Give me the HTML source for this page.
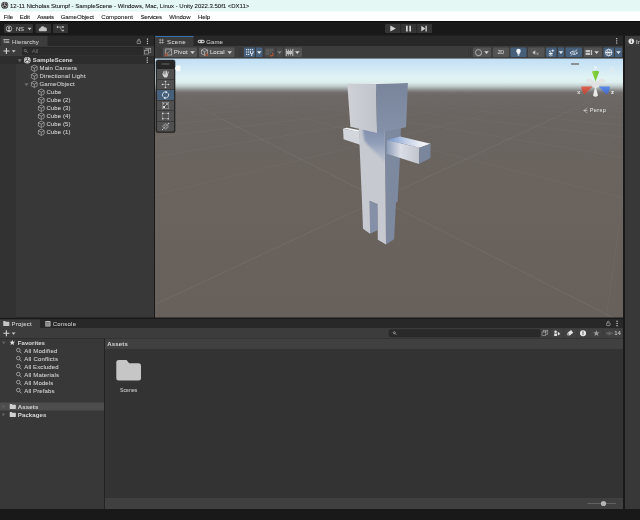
<!DOCTYPE html>
<html><head><meta charset="utf-8"><title>Unity</title>
<style>
html,body{margin:0;padding:0;background:#191919;overflow:hidden;width:640px;height:520px}
#r{position:absolute;left:0;top:0;width:1280px;height:1040px;transform:scale(.5);transform-origin:0 0;
font-family:"Liberation Sans",sans-serif;overflow:hidden;background:#191919}
#r>div,#r>span,#r>svg{position:absolute;display:block}
#r>span{white-space:pre;-webkit-text-stroke:.15px}
</style></head><body><div id="r">
<div style="left:0px;top:0px;width:1280px;height:42px;background:#ffffff;"></div>
<div style="left:0px;top:0px;width:1280px;height:23.2px;background:#e5f7f5;"></div>
<svg style="left:1.6px;top:3.4px;" width="15" height="15" viewBox="0 0 16 16"><circle cx="8" cy="8" r="7.5" fill="#222"/><path d="M8 8 L8 2.5 M8 8 L3.2 10.8 M8 8 L12.8 10.8" stroke="#eee" stroke-width="1.6" fill="none"/><path d="M8 1.8 L13.4 4.9 L13.4 11.1 L8 14.2 L2.6 11.1 L2.6 4.9 Z" fill="none" stroke="#eee" stroke-width="1"/></svg>
<span style="left:20px;top:3.3px;line-height:16px;font-size:12px;color:#111;letter-spacing:-0.031px;">12-11 Nicholas Stumpf - SampleScene - Windows, Mac, Linux - Unity 2022.3.50f1 &lt;DX11&gt;</span>
<span style="left:7.6px;top:25.000000000000004px;line-height:16px;font-size:12px;color:#111;letter-spacing:-0.286px;">File</span>
<span style="left:39.6px;top:25.000000000000004px;line-height:16px;font-size:12px;color:#111;letter-spacing:-0.072px;">Edit</span>
<span style="left:74.6px;top:25.000000000000004px;line-height:16px;font-size:12px;color:#111;letter-spacing:-0.569px;">Assets</span>
<span style="left:121.4px;top:25.000000000000004px;line-height:16px;font-size:12px;color:#111;letter-spacing:-0.076px;">GameObject</span>
<span style="left:202.5px;top:25.000000000000004px;line-height:16px;font-size:12px;color:#111;letter-spacing:0.161px;">Component</span>
<span style="left:281px;top:25.000000000000004px;line-height:16px;font-size:12px;color:#111;letter-spacing:-0.439px;">Services</span>
<span style="left:338.5px;top:25.000000000000004px;line-height:16px;font-size:12px;color:#111;letter-spacing:-0.031px;">Window</span>
<span style="left:396px;top:25.000000000000004px;line-height:16px;font-size:12px;color:#111;letter-spacing:-0.172px;">Help</span>
<div style="left:0px;top:42px;width:1280px;height:30px;background:#191919;"></div>
<div style="left:0px;top:42px;width:1280px;height:2.4px;background:#0b0b0b;"></div>
<div style="left:7.5px;top:48px;width:58.7px;height:18.4px;background:#333333;border-radius:2px;"></div>
<div style="left:70.8px;top:48px;width:31.200000000000003px;height:18.4px;background:#333333;border-radius:2px;"></div>
<div style="left:106.2px;top:48px;width:29.999999999999986px;height:18.4px;background:#333333;border-radius:2px;"></div>
<span style="left:32px;top:49.4px;line-height:16px;font-size:12px;color:#c8c8c8;letter-spacing:-0.536px;">NS</span>
<div style="left:770px;top:48px;width:30px;height:18.4px;background:#353535;border-radius:2px 0 0 2px;"></div>
<div style="left:801px;top:48px;width:31px;height:18.4px;background:#353535;"></div>
<div style="left:833px;top:48px;width:31.4px;height:18.4px;background:#353535;border-radius:0 2px 2px 0;"></div>
<svg style="left:770px;top:48px;" width="95" height="18.4" viewBox="0 0 95 18.4"><path d="M10.6 3.2 L21.6 9.2 L10.6 15.2 Z" fill="#d4d4d4"/><rect x="42" y="3.4" width="3.4" height="11.6" fill="#d4d4d4"/><rect x="48.6" y="3.4" width="3.4" height="11.6" fill="#d4d4d4"/><path d="M72.6 3.4 L80.6 9.2 L72.6 15 Z" fill="#d4d4d4"/><rect x="81" y="3.4" width="2.6" height="11.6" fill="#d4d4d4"/></svg>
<div style="left:0px;top:71.4px;width:308px;height:20.6px;background:#282828;"></div>
<div style="left:1px;top:72.4px;width:94px;height:19.6px;background:#3c3c3c;"></div>
<div style="left:0px;top:92px;width:308px;height:20px;background:#3c3c3c;"></div>
<div style="left:0px;top:112px;width:308px;height:522.6px;background:#383838;"></div>
<div style="left:0px;top:112px;width:32px;height:522.6px;background:#323232;"></div>
<div style="left:0px;top:112.4px;width:308px;height:15.4px;background:#2d2d2d;"></div>
<span style="left:24px;top:74.6px;line-height:16px;font-size:12px;color:#c8c8c8;letter-spacing:0.293px;">Hierarchy</span>
<div style="left:44px;top:92.6px;width:242px;height:18px;background:#2a2a2a;border-radius:3px;border:1px solid #242424;border-top:2.6px solid #222;box-sizing:border-box;"></div>
<span style="left:63.6px;top:93.2px;line-height:16px;font-size:12px;color:#686868;letter-spacing:-0.315px;">All</span>
<span style="left:65.6px;top:111.3px;line-height:16px;font-size:12px;color:#d2d2d2;font-weight:700;letter-spacing:0.178px;">SampleScene</span>
<span style="left:79px;top:127.3px;line-height:16px;font-size:12px;color:#d2d2d2;letter-spacing:0.270px;">Main Camera</span>
<span style="left:79px;top:143.3px;line-height:16px;font-size:12px;color:#d2d2d2;letter-spacing:0.380px;">Directional Light</span>
<span style="left:79px;top:159.3px;line-height:16px;font-size:12px;color:#d2d2d2;letter-spacing:0.314px;">GameObject</span>
<span style="left:93px;top:175.3px;line-height:16px;font-size:12px;color:#d2d2d2;letter-spacing:0.328px;">Cube</span>
<span style="left:93px;top:191.3px;line-height:16px;font-size:12px;color:#d2d2d2;letter-spacing:0.164px;">Cube (2)</span>
<span style="left:93px;top:207.3px;line-height:16px;font-size:12px;color:#d2d2d2;letter-spacing:0.164px;">Cube (3)</span>
<span style="left:93px;top:223.3px;line-height:16px;font-size:12px;color:#d2d2d2;letter-spacing:0.164px;">Cube (4)</span>
<span style="left:93px;top:239.3px;line-height:16px;font-size:12px;color:#d2d2d2;letter-spacing:0.164px;">Cube (5)</span>
<span style="left:93px;top:255.3px;line-height:16px;font-size:12px;color:#d2d2d2;letter-spacing:0.164px;">Cube (1)</span>
<div style="left:310.4px;top:71.4px;width:936px;height:20.6px;background:#282828;"></div>
<div style="left:310.4px;top:72.4px;width:77px;height:19.6px;background:#3c3c3c;"></div>
<div style="left:310.4px;top:72px;width:77px;height:1.8px;background:#3672b0;"></div>
<div style="left:310.4px;top:92px;width:936px;height:25.4px;background:#3c3c3c;"></div>
<span style="left:334px;top:74.6px;line-height:16px;font-size:12px;color:#d2d2d2;letter-spacing:0.794px;">Scene</span>
<span style="left:412.6px;top:74.6px;line-height:16px;font-size:12px;color:#c4c4c4;letter-spacing:0.178px;">Game</span>
<div style="left:1250px;top:71.4px;width:30px;height:20.6px;background:#282828;"></div>
<div style="left:1250px;top:72.4px;width:30px;height:19.6px;background:#3c3c3c;"></div>
<div style="left:1250px;top:92px;width:30px;height:925.6px;background:#383838;"></div>
<span style="left:1272px;top:74.6px;line-height:16px;font-size:12px;color:#d2d2d2;">In</span>
<div style="left:0px;top:637.5px;width:1246px;height:18.5px;background:#282828;"></div>
<div style="left:0px;top:638.5px;width:80px;height:18px;background:#3c3c3c;"></div>
<div style="left:0px;top:656px;width:1246px;height:21px;background:#3c3c3c;"></div>
<div style="left:0px;top:677px;width:208px;height:340.6px;background:#383838;"></div>
<div style="left:208px;top:677px;width:2px;height:340.6px;background:#232323;"></div>
<div style="left:210px;top:677px;width:1036px;height:21px;background:#404040;"></div>
<div style="left:210px;top:698px;width:1036px;height:298px;background:#333333;"></div>
<div style="left:210px;top:995.8px;width:1036px;height:21.8px;background:#404040;"></div>
<span style="left:23px;top:639.1999999999999px;line-height:16px;font-size:12px;color:#d2d2d2;letter-spacing:0.520px;">Project</span>
<span style="left:105.4px;top:639.1999999999999px;line-height:16px;font-size:12px;color:#c4c4c4;letter-spacing:0.424px;">Console</span>
<div style="left:0px;top:805px;width:208px;height:16px;background:#4d4d4d;"></div>
<div style="left:0px;top:676.4px;width:208px;height:1.2px;background:#2e2e2e;"></div>
<span style="left:35.6px;top:676.5999999999999px;line-height:16px;font-size:12px;color:#d2d2d2;font-weight:700;letter-spacing:0.116px;">Favorites</span>
<span style="left:48.6px;top:692.5999999999999px;line-height:16px;font-size:12px;color:#d2d2d2;letter-spacing:0.364px;">All Modified</span>
<span style="left:48.6px;top:708.5999999999999px;line-height:16px;font-size:12px;color:#d2d2d2;letter-spacing:0.378px;">All Conflicts</span>
<span style="left:48.6px;top:724.5999999999999px;line-height:16px;font-size:12px;color:#d2d2d2;letter-spacing:0.213px;">All Excluded</span>
<span style="left:48.6px;top:740.5999999999999px;line-height:16px;font-size:12px;color:#d2d2d2;letter-spacing:0.342px;">All Materials</span>
<span style="left:48.6px;top:756.5999999999999px;line-height:16px;font-size:12px;color:#d2d2d2;letter-spacing:0.304px;">All Models</span>
<span style="left:48.6px;top:772.5999999999999px;line-height:16px;font-size:12px;color:#d2d2d2;letter-spacing:0.215px;">All Prefabs</span>
<span style="left:35.6px;top:804.5999999999999px;line-height:16px;font-size:12px;color:#d2d2d2;font-weight:700;letter-spacing:0.340px;">Assets</span>
<span style="left:35.6px;top:820.5999999999999px;line-height:16px;font-size:12px;color:#d2d2d2;font-weight:700;letter-spacing:0.251px;">Packages</span>
<span style="left:214.4px;top:679.0px;line-height:16px;font-size:12px;color:#d2d2d2;font-weight:700;letter-spacing:0.373px;">Assets</span>
<span style="left:240px;top:774.4px;line-height:14px;font-size:10px;color:#c8c8c8;letter-spacing:0.273px;">Scenes</span>
<div style="left:0px;top:1017.6px;width:1280px;height:22.4px;background:#191919;"></div>
<div style="left:310.4px;top:117.2px;width:936px;height:517.4px;background:linear-gradient(to bottom,#c1dff5 0.4px,#d1e8f5 18.8px,#e1f4f4 39.8px,#dceeee 47.8px,#c6d2d2 54.4px,#a6acac 59.4px,#8b8c8c 63.4px,#767271 67.4px,#6e6967 72.8px,#6b6561 112.8px,#68605a 516.8px);"></div>
<svg style="left:310.4px;top:117.2px;" width="936" height="517.4" viewBox="0 0 936 517.4"><defs><linearGradient id="gl" x1="0" x2="1" y1="0" y2="0"><stop offset="0" stop-color="#cfd1d7"/><stop offset="1" stop-color="#c1c4cc"/></linearGradient><linearGradient id="gd" x1="0" x2="0" y1="0" y2="1"><stop offset="0" stop-color="#79859b"/><stop offset="1" stop-color="#8491a8"/></linearGradient><linearGradient id="ga" x1="0" x2="1" y1="0" y2="0"><stop offset="0" stop-color="#8e9cb8"/><stop offset=".42" stop-color="#dadde5"/><stop offset="1" stop-color="#c0c4cc"/></linearGradient><linearGradient id="gt" x1="0" x2="1" y1="0" y2="0"><stop offset="0" stop-color="#7091cf"/><stop offset=".45" stop-color="#c4d0e6"/><stop offset=".8" stop-color="#eef1f6"/><stop offset="1" stop-color="#f1f3f7"/></linearGradient><linearGradient id="gb" gradientUnits="userSpaceOnUse" x1="0" y1="144.8" x2="0" y2="202.8"><stop offset="0" stop-color="#8290ad"/><stop offset=".45" stop-color="#909db8" stop-opacity=".95"/><stop offset="1" stop-color="#aab5c9" stop-opacity=".55"/></linearGradient><filter id="bl" x="-20%" y="-20%" width="140%" height="140%"><feGaussianBlur stdDeviation="1.7"/></filter><clipPath id="cf"><polygon points="407.4,134.8 459.2,134.8 461.4,300.2 413.4,298.8"/></clipPath></defs><linearGradient id="gg" gradientUnits="userSpaceOnUse" x1="0" y1="64.8" x2="0" y2="132.8"><stop offset="0" stop-color="#8c8a86" stop-opacity="0"/><stop offset="1" stop-color="#8c8a86" stop-opacity="1"/></linearGradient><line x1="966.0" y1="64.8" x2="902.1" y2="520.8" stroke="url(#gg)" stroke-width="1.8" opacity="0.15"/><line x1="914.0" y1="64.8" x2="-61.9" y2="520.8" stroke="url(#gg)" stroke-width="1.8" opacity="0.26"/><line x1="862.0" y1="64.8" x2="-1025.9" y2="520.8" stroke="url(#gg)" stroke-width="1.8" opacity="0.15"/><line x1="810.0" y1="64.8" x2="-1989.9" y2="520.8" stroke="url(#gg)" stroke-width="1.8" opacity="0.15"/><line x1="758.0" y1="64.8" x2="-2953.9" y2="520.8" stroke="url(#gg)" stroke-width="1.8" opacity="0.15"/><line x1="706.0" y1="64.8" x2="-3917.9" y2="520.8" stroke="url(#gg)" stroke-width="1.8" opacity="0.15"/><line x1="654.0" y1="64.8" x2="-4881.9" y2="520.8" stroke="url(#gg)" stroke-width="1.8" opacity="0.15"/><line x1="602.0" y1="64.8" x2="-5845.9" y2="520.8" stroke="url(#gg)" stroke-width="1.8" opacity="0.15"/><line x1="550.0" y1="64.8" x2="-6809.9" y2="520.8" stroke="url(#gg)" stroke-width="1.8" opacity="0.15"/><line x1="498.0" y1="64.8" x2="-7773.9" y2="520.8" stroke="url(#gg)" stroke-width="1.8" opacity="0.15"/><line x1="22.8" y1="64.8" x2="921.1" y2="520.8" stroke="url(#gg)" stroke-width="1.8" opacity="0.26"/><line x1="76.1" y1="64.8" x2="1909.2" y2="520.8" stroke="url(#gg)" stroke-width="1.8" opacity="0.15"/><line x1="129.4" y1="64.8" x2="2897.3" y2="520.8" stroke="url(#gg)" stroke-width="1.8" opacity="0.15"/><line x1="182.7" y1="64.8" x2="3885.4" y2="520.8" stroke="url(#gg)" stroke-width="1.8" opacity="0.15"/><line x1="236.0" y1="64.8" x2="4873.5" y2="520.8" stroke="url(#gg)" stroke-width="1.8" opacity="0.15"/><line x1="289.3" y1="64.8" x2="5861.6" y2="520.8" stroke="url(#gg)" stroke-width="1.8" opacity="0.15"/><line x1="342.6" y1="64.8" x2="6849.7" y2="520.8" stroke="url(#gg)" stroke-width="1.8" opacity="0.15"/><line x1="395.9" y1="64.8" x2="7837.8" y2="520.8" stroke="url(#gg)" stroke-width="1.8" opacity="0.15"/><line x1="449.2" y1="64.8" x2="8825.9" y2="520.8" stroke="url(#gg)" stroke-width="1.8" opacity="0.15"/><polygon points="376.0,140.6 407.6,146.6 411.6,173.2 377.2,161.4" fill="#d3d6dc"/><polygon points="376.0,140.2 383.6,138.6 407.6,143.2 407.6,146.8" fill="#f2f4f7"/><polygon points="459.2,134.8 492.0,134.8 489.2,212.8 485.2,286.6 461.4,300.2" fill="#7d899f"/><polygon points="461.4,298.8 482.0,286.6 478.2,361.6 462.0,372.2" fill="#7d899f"/><polygon points="429.2,284.4 445.0,290.8 445.0,343.6 430.2,350.6" fill="#8390a7"/><polygon points="407.4,134.8 459.2,134.8 461.4,300.2 462.0,372.2 445.6,362.6 445.0,290.8 429.2,284.4 430.2,350.6 416.0,340.4 413.4,272.8" fill="#c6c9d0"/><g clip-path="url(#cf)"><polygon points="414.8,134.8 473.6,134.8 473.6,216.8 457.2,204.0 438.0,184.8 426.0,173.6 418.4,164.0" fill="url(#gb)" filter="url(#bl)"/></g><polygon points="384.6,50.3 442.1,49.8 444.1,149.0 390.8,136.6" fill="url(#gl)"/><polygon points="442.1,49.8 505.8,49.0 502.1,137.3 444.1,149.0" fill="url(#gd)"/><polygon points="384.6,50.6 442.1,48.8 505.8,49.2 442.1,50.8" fill="#e8ebef"/><polygon points="464.0,162.8 529.0,178.4 528.0,211.0 463.6,190.6" fill="url(#ga)"/><polygon points="464.0,162.8 490.4,156.2 551.2,170.4 529.0,178.4" fill="url(#gt)"/><polygon points="529.0,178.4 551.2,170.4 550.8,198.8 528.0,211.0" fill="#7a869c"/></svg>
<div style="left:312.2px;top:120.2px;width:37.6px;height:145.2px;background:#262626;border-radius:4px;box-shadow:0 0 0 1px rgba(20,20,20,.55);"></div>
<div style="left:322.6px;top:125.6px;width:16.4px;height:4.4px;background:#464646;"></div>
<div style="left:314.4px;top:138px;width:33.2px;height:19.6px;background:#505050;"></div>
<div style="left:314.4px;top:159px;width:33.2px;height:19.6px;background:#505050;"></div>
<div style="left:314.4px;top:180px;width:33.2px;height:19.6px;background:#46607c;"></div>
<div style="left:314.4px;top:201px;width:33.2px;height:19.6px;background:#505050;"></div>
<div style="left:314.4px;top:222px;width:33.2px;height:19.6px;background:#505050;"></div>
<div style="left:314.4px;top:243px;width:33.2px;height:19.6px;background:#505050;border-radius:0 0 3px 3px;"></div>
<svg style="left:322.6px;top:139.6px;" width="16" height="16" viewBox="0 0 16 16"><g fill="#d6d6d6"><rect x="4.6" y="2.4" width="1.9" height="8" rx=".95" transform="rotate(-12 5.5 10)"/><rect x="6.6" y=".8" width="1.9" height="9" rx=".95" transform="rotate(-3 7.5 10)"/><rect x="8.8" y="1" width="1.9" height="9" rx=".95" transform="rotate(5 9.7 10)"/><rect x="11" y="2.6" width="1.8" height="8" rx=".9" transform="rotate(14 11.9 10)"/><path d="M1.4 7.4 Q2.2 6.2 3.4 7.2 L5.4 9.6 L12.8 8.4 Q13.4 13 10.6 15.2 H6.2 Q4.6 14.4 3.6 11.8 Z"/></g></svg>
<svg style="left:322.6px;top:160.6px;overflow:visible;" width="16" height="16" viewBox="0 0 16 16"><path d="M8 2.6V6.4M8 9.6V13.4M2.6 8H6.4M9.6 8H13.4" stroke="#d6d6d6" stroke-width="1.2" fill="none"/><path d="M8 -.2 L10.2 3 H5.8 Z M8 16.2 L10.2 13 H5.8 Z M-.2 8 L3 5.8 V10.2 Z M16.2 8 L13 5.8 V10.2 Z" fill="#d6d6d6"/><rect x="7.3" y="7.3" width="1.4" height="1.4" fill="#d6d6d6"/></svg>
<svg style="left:322.6px;top:182px;overflow:visible;" width="16" height="16" viewBox="0 0 16 16"><path d="M2.6 11.4 A6.4 6.4 0 0 1 9 1.8" stroke="#e8edf2" stroke-width="1.6" fill="none"/><path d="M13.4 4.6 A6.4 6.4 0 0 1 7 14.2" stroke="#e8edf2" stroke-width="1.6" fill="none"/><path d="M8.4 -.6 L12.6 2.4 L8.2 4.8 Z M7.6 16.6 L3.4 13.6 L7.8 11.2 Z" fill="#e8edf2"/></svg>
<svg style="left:322.6px;top:203px;" width="16" height="16" viewBox="0 0 16 16"><rect x="1.5" y="1.5" width="13" height="13" fill="none" stroke="#a4a4a4" stroke-width="1.1"/><rect x="3" y="9" width="4" height="4" fill="#d6d6d6"/><path d="M7.2 8.8 L11.4 4.6" stroke="#d6d6d6" stroke-width="1.3"/><path d="M8.6 3.6 H12.4 V7.4 Z" fill="#d6d6d6"/><rect x="3" y="3.2" width="2.6" height="2.6" fill="#d6d6d6" opacity=".8"/></svg>
<svg style="left:322.6px;top:224px;" width="16" height="16" viewBox="0 0 16 16"><rect x="2.5" y="2.5" width="11" height="11" fill="none" stroke="#9e9e9e" stroke-width="1"/><circle cx="2.5" cy="2.5" r="1.7" fill="#d6d6d6"/><circle cx="13.5" cy="2.5" r="1.7" fill="#d6d6d6"/><circle cx="2.5" cy="13.5" r="1.7" fill="#d6d6d6"/><circle cx="13.5" cy="13.5" r="1.7" fill="#d6d6d6"/></svg>
<svg style="left:322.6px;top:245px;" width="16" height="16" viewBox="0 0 16 16"><ellipse cx="8" cy="8" rx="3.2" ry="6" fill="none" stroke="#b4b4b4" stroke-width="1"/><ellipse cx="8" cy="8" rx="6" ry="3.2" fill="none" stroke="#b4b4b4" stroke-width="1"/><path d="M2 14 L14 2" stroke="#b4b4b4" stroke-width="1"/><path d="M15.4 .6 L15 4 L12 1 Z" fill="#d6d6d6"/><circle cx="2" cy="14" r="1.2" fill="#d6d6d6"/></svg>
<svg style="left:349px;top:130.4px;" width="13" height="14" viewBox="0 0 13 14"><path d="M.6 6.8 L4.4 .8 H11.8 V12.6 H4.4 Z" fill="#fbfbfb"/></svg>
<svg style="left:1120px;top:110px;" width="140" height="100" viewBox="0 0 140 100"><defs><linearGradient id="cg" x1="0" x2="1"><stop offset="0" stop-color="#8fd84a"/><stop offset="1" stop-color="#6cc02a"/></linearGradient><linearGradient id="cr" x1="0" x2="0" y1="0" y2="1"><stop offset="0" stop-color="#e0604e"/><stop offset="1" stop-color="#b8473a"/></linearGradient><linearGradient id="cb" x1="0" x2="0" y1="0" y2="1"><stop offset="0" stop-color="#5d8bea"/><stop offset="1" stop-color="#3f68c8"/></linearGradient></defs><polygon points="68.4,58.8 52.0,54.0 52.4,49.6 56.8,46.4 61.2,47.6 70.8,56.0" fill="#e4e4e4"/><polygon points="74.0,58.8 90.4,54.0 90.0,49.6 85.6,46.4 81.2,47.6 71.6,56.0" fill="#e4e4e4"/><path d="M71.0,52.8 L63.8,33.2 Q71.0,29.6 78.4,33.2 Z" fill="url(#cg)"/><path d="M65.2,62.8 L42.6,63.2 Q42.4,72.0 49.2,78.8 Z" fill="url(#cr)"/><path d="M77.2,62.8 L99.8,63.2 Q100.0,72.0 93.2,78.8 Z" fill="url(#cb)"/><polygon points="64.4,55.2 71.2,52.4 78.2,55.2 78.2,63.2 71.2,66.8 64.4,63.2" fill="#e2e2e2"/><path d="M71.0,61.6 L66.0,81.2 Q71.0,86.0 76.0,81.2 Z" fill="#e9e9e9"/></svg>
<span style="left:1188px;top:124.8px;line-height:16px;font-size:12px;color:#f8f8f8;">y</span>
<span style="left:1154.6px;top:175.20000000000002px;line-height:16px;font-size:12px;color:#f8f8f8;">x</span>
<span style="left:1221.8px;top:175.20000000000002px;line-height:16px;font-size:12px;color:#f8f8f8;">z</span>
<span style="left:1179.6px;top:212.3px;line-height:15px;font-size:11px;color:#dedede;letter-spacing:0.770px;">Persp</span>
<svg style="left:1165px;top:214px;" width="12" height="14" viewBox="0 0 12 14"><path d="M9.8 2.2 L2.4 7 L9.8 11.8 M2.4 7 H10" stroke="#e2e2e2" stroke-width="1.1" fill="none"/></svg>
<div style="left:1142px;top:125.6px;width:16px;height:4.6px;background:#8b9299;"></div>
<svg style="left:1219px;top:131px;" width="10" height="14" viewBox="0 0 10 14"><rect x="1.5" y="6.5" width="7" height="6" fill="none" stroke="#f0e9e4" stroke-width="1" opacity=".8"/><path d="M3 6.5 V4.5 A2 2 0 0 1 7 4.5" fill="none" stroke="#f0e9e4" stroke-width="1" opacity=".8"/></svg>
<div style="left:315.5px;top:96.5px;width:1.6px;height:17px;background:#353535;"></div>
<div style="left:319.1px;top:96.5px;width:1.6px;height:17px;background:#353535;"></div>
<div style="left:477.5px;top:96.5px;width:1.6px;height:17px;background:#353535;"></div>
<div style="left:481.1px;top:96.5px;width:1.6px;height:17px;background:#353535;"></div>
<div style="left:936.5px;top:96.5px;width:1.6px;height:17px;background:#353535;"></div>
<div style="left:940.1px;top:96.5px;width:1.6px;height:17px;background:#353535;"></div>
<div style="left:326px;top:95px;width:68px;height:18.8px;background:#535353;border-radius:2px;"></div>
<div style="left:398px;top:95px;width:71px;height:18.8px;background:#535353;border-radius:2px;"></div>
<div style="left:488px;top:95px;width:21.600000000000023px;height:18.8px;background:#46607c;border-radius:2px 0 0 2px;"></div>
<div style="left:512px;top:95px;width:12.600000000000023px;height:18.8px;background:#46607c;border-radius:0 2px 2px 0;"></div>
<div style="left:529px;top:95px;width:21px;height:18.8px;background:#474747;border-radius:2px 0 0 2px;"></div>
<div style="left:552.6px;top:95px;width:13.0px;height:18.8px;background:#474747;border-radius:0 2px 2px 0;"></div>
<div style="left:569px;top:95px;width:35px;height:18.8px;background:#535353;border-radius:2px;"></div>
<div style="left:946.4px;top:95px;width:35.80000000000007px;height:18.8px;background:#535353;border-radius:2px;"></div>
<div style="left:985.6px;top:95px;width:32.0px;height:18.8px;background:#535353;border-radius:2px;"></div>
<div style="left:1020.6px;top:95px;width:32.39999999999998px;height:18.8px;background:#46607c;border-radius:2px;"></div>
<div style="left:1056.2px;top:95px;width:32.59999999999991px;height:18.8px;background:#535353;border-radius:2px;"></div>
<div style="left:1092px;top:95px;width:21px;height:18.8px;background:#46607c;border-radius:2px 0 0 2px;"></div>
<div style="left:1115.6px;top:95px;width:12.600000000000136px;height:18.8px;background:#46607c;border-radius:0 2px 2px 0;"></div>
<div style="left:1131.4px;top:95px;width:33.0px;height:18.8px;background:#46607c;border-radius:2px;"></div>
<div style="left:1168px;top:95px;width:35.799999999999955px;height:18.8px;background:#535353;border-radius:2px;"></div>
<div style="left:1207px;top:95px;width:20.59999999999991px;height:18.8px;background:#46607c;border-radius:2px 0 0 2px;"></div>
<div style="left:1230px;top:95px;width:13.799999999999955px;height:18.8px;background:#46607c;border-radius:0 2px 2px 0;"></div>
<span style="left:347.4px;top:96.3px;line-height:16px;font-size:12px;color:#d6d6d6;letter-spacing:0.302px;">Pivot</span>
<span style="left:420px;top:96.3px;line-height:16px;font-size:12px;color:#d6d6d6;letter-spacing:0.062px;">Local</span>
<span style="left:995px;top:97.3px;line-height:15px;font-size:11px;color:#d6d6d6;letter-spacing:-0.531px;">2D</span>
<svg style="left:0px;top:0px;" width="1280" height="130" viewBox="0 0 1280 130"><g transform="translate(328,96.5)"><rect x="3.5" y="1.5" width="12" height="12" fill="none" stroke="#cfcfcf" stroke-width="1.2"/><path d="M4 13 L14.5 2.5" stroke="#cfcfcf" stroke-width="1"/><circle cx="4.6" cy="12.8" r="2.3" fill="#535353" stroke="#e0592c" stroke-width="1.4"/></g><g transform="translate(401,96)"><path d="M8 1.2 L14 4.2 V11.4 L8 14.6 L2 11.4 V4.2 Z M2 4.2 L8 7.4 L14 4.2 M8 7.4 V14.6" fill="none" stroke="#cfcfcf" stroke-width="1.2"/><circle cx="12.2" cy="13.2" r="2.3" fill="#535353" stroke="#e0592c" stroke-width="1.4"/></g><path d="M380.4 102.6 H389.6 L385 107.8 Z" fill="#d2d2d2"/><path d="M454.79999999999995 102.6 H464.0 L459.4 107.8 Z" fill="#d2d2d2"/><g transform="translate(491.4,97.2)" fill="#e3e9f0"><rect x=".6" y="1" width="2.6" height="2.2"/><rect x="4.6" y="1" width="2.6" height="2.2"/><rect x="8.6" y="1" width="2.6" height="2.2"/><rect x="12.6" y="1" width="2.4" height="2.2"/><rect x=".6" y="5.8" width="2.6" height="2.2"/><rect x="4.6" y="5.8" width="2.6" height="2.2"/><rect x=".6" y="10.6" width="2.6" height="2.2"/><rect x="4.6" y="10.6" width="2.6" height="2.2"/><path d="M8.4 5 H10.4 V8 A1.6 1.6 0 0 0 13.6 8 V5 H15.6 V8 A3.6 3.6 0 0 1 13 11.4 V14.6 H11 V11.4 A3.6 3.6 0 0 1 8.4 8 Z"/></g><path d="M513.6999999999999 102.6 H522.9 L518.3 107.8 Z" fill="#e4e9ee"/><g transform="translate(531.4,97)"><path d="M2 .5 V13 M6 .5 V13 M10 .5 V9 M14 .5 V6 M0 3 H16 M0 7 H12 M0 11 H8" stroke="#8a8a8a" stroke-width="1" fill="none" stroke-dasharray="1.6 1.2"/><path d="M8.5 14.6 H12.6 A3 3 0 0 0 12.6 8.8" stroke="#e0592c" stroke-width="2" fill="none" opacity=".9"/></g><path d="M554.4 102.6 H563.6 L559 107.8 Z" fill="#858585"/><g transform="translate(571,97.5)" fill="#bcbcbc"><rect x=".6" y=".5" width="2" height="14"/><rect x="13.6" y=".5" width="2" height="14"/><rect x="2" y="4.2" width="12" height="6.4"/><rect x="5" y="1.4" width="1.6" height="12" /><rect x="9.4" y="1.4" width="1.6" height="12"/></g><path d="M590.0 102.6 H599.2 L594.6 107.8 Z" fill="#d2d2d2"/><g transform="translate(957,105.2)"><circle r="6.2" fill="none" stroke="#d2d2d2" stroke-width="1.3"/><path d="M6.2 -1.2 A6.3 6.3 0 0 1 -3.6 5.2 A5.4 5.4 0 0 0 4.2 -3.4 Z" fill="#d2d2d2"/></g><path d="M968.4 102.6 H977.6 L973 107.8 Z" fill="#d2d2d2"/><g transform="translate(1037,104.6)" fill="#f4f6f8"><circle cy="-2.4" r="4.5"/><rect x="-2.2" y="1" width="4.4" height="3.2"/><rect x="-1.7" y="5" width="3.4" height="1.5"/></g><g transform="translate(1072,105)" fill="#c6c6c6"><path d="M-6.4 -1.8 H-4.4 L-1.4 -4.4 V4.4 L-4.4 1.8 H-6.4 Z"/><path d="M.6 0 L5 4 M1 4 L5.4 0" stroke="#c6c6c6" stroke-width="1.2" transform="translate(0,.6)"/></g><g transform="translate(1102.4,105.4)" fill="#e8edf2"><path d="M-5.6 1.6 L-1 -1 L3.6 1.6 L-1 4.4 Z"/><path d="M-5.6 3.4 L-1 6.2 L3.6 3.4 V4.8 L-1 7.4 L-5.6 4.8 Z" opacity=".9"/><path d="M3.2 -7.4 L4.2 -4.8 L6.8 -3.8 L4.2 -2.8 L3.2 -.2 L2.2 -2.8 L-.4 -3.8 L2.2 -4.8 Z"/><circle cx="-2.6" cy="-3" r="1.6"/></g><path d="M1117.2 102.6 H1126.3999999999999 L1121.8 107.8 Z" fill="#e4e9ee"/><g transform="translate(1147.6,105.4)"><path d="M-7.6 .4 Q0 -6.8 7.6 .4 Q0 7 -7.6 .4 Z" fill="none" stroke="#e6ebf0" stroke-width="1.7"/><circle r="2.6" fill="#e6ebf0"/><path d="M-6.4 6 L6.8 -6.4" stroke="#46607c" stroke-width="3.4"/><path d="M-6.4 6 L6.8 -6.4" stroke="#e6ebf0" stroke-width="1.5"/></g><g transform="translate(1171.2,100)" fill="#c4c4c4"><rect x="0" y="0" width="8.8" height="4.4"/><rect x="0" y="5.6" width="8.8" height="4.4"/><rect x="10.4" y="0" width="2.6" height="10"/></g><path d="M1188.6000000000001 102.6 H1197.8 L1193.2 107.8 Z" fill="#d2d2d2"/><g transform="translate(1217.4,105)"><circle r="6.6" fill="none" stroke="#eef2f6" stroke-width="1.5"/><ellipse rx="2.6" ry="6.6" fill="none" stroke="#eef2f6" stroke-width="1.2"/><path d="M-6.6 0 H6.6" stroke="#eef2f6" stroke-width="1.3"/><circle r="1.9" fill="#eef2f6"/><circle cx="-4.6" cy="0" r="1.5" fill="#eef2f6"/><circle cx="4.6" cy="0" r="1.5" fill="#eef2f6"/></g><path d="M1232.4 102.6 H1241.6 L1237 107.8 Z" fill="#e4e9ee"/></svg>
<svg style="left:0px;top:0px;" width="1280" height="1040" viewBox="0 0 1280 1040"><g transform="translate(18,57.6)"><circle r="5.6" fill="none" stroke="#c4c4c4" stroke-width="1.5"/><circle cy="-1.7" r="2" fill="#c4c4c4"/><path d="M-4 3.9 Q0 -1.4 4 3.9 Q0 6.6 -4 3.9Z" fill="#c4c4c4"/></g><path d="M55.06 55.64 H63.34 L59.2 60.32 Z" fill="#c4c4c4"/><g transform="translate(86.2,58)"><path d="M-7.4 4.6 A3.4 3.4 0 0 1 -5.6 -1.6 A4.6 4.6 0 0 1 3 -3.2 A3.6 3.6 0 0 1 7.4 1 A2.6 2.6 0 0 1 6 4.6 Z" fill="#c4c4c4"/></g><g transform="translate(120.6,57.6)" stroke="#c4c4c4" fill="none" stroke-width="1.2"><path d="M-5 -3.6 H-1 L3 3.4 H5 M-1 -3.6 H5"/><circle cx="-5.6" cy="-3.6" r="1.3" fill="#c4c4c4"/><circle cx="5.4" cy="-3.6" r="1.3" fill="#c4c4c4"/><circle cx="5.4" cy="3.4" r="1.3" fill="#c4c4c4"/></g><g fill="#c4c4c4"><rect x="7" y="78.4" width="11.6" height="1.6"/><rect x="10.6" y="81.6" width="8" height="1.5"/><rect x="10.6" y="84.6" width="8" height="1.5"/><rect x="7.6" y="78.4" width="1.4" height="7.6"/></g><path d="M6.800000000000001 102 H18.8 M12.8 96 V108" stroke="#d4d4d4" stroke-width="2.2"/><path d="M23.49 100.55999999999999 H31.31 L27.4 104.97999999999999 Z" fill="#c8c8c8"/><circle cx="50.6" cy="101" r="2.2" fill="none" stroke="#9a9a9a" stroke-width="1.1"/><path d="M52.14 102.54 L55.14 105.54" stroke="#9a9a9a" stroke-width="1.4000000000000001"/><g transform="translate(288,95.5)" stroke="#b8b8b8" fill="none" stroke-width="1.1"><rect x="4" y="1" width="9.6" height="8.6"/><rect x="1" y="5" width="8" height="7.6" fill="#3c3c3c"/><path d="M6.6 3.4 H11 M9 3.4 V7"/></g><g transform="translate(274.20000000000005,77.4) scale(.88)"><rect x="0" y="5" width="8" height="6" rx="1" fill="none" stroke="#c0c0c0" stroke-width="1.3"/><path d="M1.6 5 V3.4 A2.4 2.4 0 0 1 6.4 3.4" fill="none" stroke="#c0c0c0" stroke-width="1.3"/></g><rect x="293.7" y="77.0" width="2.5" height="2.6" fill="#c0c0c0"/><rect x="293.7" y="81.4" width="2.5" height="2.6" fill="#c0c0c0"/><rect x="293.7" y="85.8" width="2.5" height="2.6" fill="#c0c0c0"/><rect x="293.29999999999995" y="114.60000000000001" width="2.5" height="2.6" fill="#b8b8b8"/><rect x="293.29999999999995" y="119.00000000000001" width="2.5" height="2.6" fill="#b8b8b8"/><rect x="293.29999999999995" y="123.4" width="2.5" height="2.6" fill="#b8b8b8"/><rect x="1232.1000000000001" y="76.0" width="2.5" height="2.6" fill="#b8b8b8"/><rect x="1232.1000000000001" y="80.4" width="2.5" height="2.6" fill="#b8b8b8"/><rect x="1232.1000000000001" y="84.8" width="2.5" height="2.6" fill="#b8b8b8"/><g transform="translate(1213.1999999999998,641.6) scale(.88)"><rect x="0" y="5" width="8" height="6" rx="1" fill="none" stroke="#c0c0c0" stroke-width="1.3"/><path d="M1.6 5 V3.4 A2.4 2.4 0 0 1 6.4 3.4" fill="none" stroke="#c0c0c0" stroke-width="1.3"/></g><rect x="1232.9" y="641.1999999999999" width="2.5" height="2.6" fill="#c0c0c0"/><rect x="1232.9" y="645.5999999999999" width="2.5" height="2.6" fill="#c0c0c0"/><rect x="1232.9" y="649.9999999999999" width="2.5" height="2.6" fill="#c0c0c0"/><g stroke="#c4c4c4" stroke-width="1.1" fill="none"><path d="M317.8 80.2 H327.8 M317.8 85 H327.8 M320.4 77.6 V87.6 M325.2 77.6 V87.6"/></g><g transform="translate(402.4,83)"><rect x="-7" y="-3.4" width="14" height="6.8" rx="3.4" fill="#c4c4c4"/><circle cx="-3.4" r="1.5" fill="#282828"/><circle cx="3.4" r="1.5" fill="#282828"/></g><g transform="translate(1262.6,82.6)"><circle r="5.6" fill="#e4e4e4"/><rect x="-.9" y="-1.2" width="1.8" height="4.4" fill="#3c3c3c"/><rect x="-.9" y="-3.6" width="1.8" height="1.6" fill="#3c3c3c"/></g><path transform="translate(6.4,642.2) scale(0.95)" d="M0 1 Q0 0 1 0 H4.4 L5.6 1.6 H12 Q13 1.6 13 2.6 V9.4 Q13 10.4 12 10.4 H1 Q0 10.4 0 9.4 Z" fill="#c4c4c4"/><g transform="translate(90.4,642)"><rect x="0" y="0" width="10.6" height="11.2" rx="1.4" fill="#c4c4c4"/><path d="M2.4 3 H9 M2.4 5.6 H9 M2.4 8.2 H9" stroke="#2c2c2c" stroke-width="1.1"/><rect x=".8" y="1" width="1.4" height="9" fill="#2c2c2c" opacity=".55"/></g><path d="M6.800000000000001 666.4 H18.8 M12.8 660.4 V672.4" stroke="#d4d4d4" stroke-width="2.2"/><path d="M23.29 664.96 H31.11 L27.2 669.38 Z" fill="#c8c8c8"/><path d="M35.4 118.60000000000001 H43.4 L39.4 124.60000000000001 Z" fill="#6e6e6e"/><g transform="translate(54.6,120.4)"><circle r="6.6" fill="#e8e8e8"/><path d="M0 0 V-5 M0 0 L4.4 2.6 M0 0 L-4.4 2.6" stroke="#2d2d2d" stroke-width="1.7"/><path d="M0 -5.6 L-4.6 -2.4 M0 -5.6 L4.6 -2.4 M-4.8 2.8 L-4.8 -2 M4.8 2.8 L4.8 -2 M-4.6 3 L0 5.8 L4.6 3" stroke="#2d2d2d" stroke-width=".9" fill="none"/></g><g transform="translate(68.6,136.6)" fill="none" stroke="#c2c2c2" stroke-width="1.15"><path d="M0 -6.4 L5.8 -3.4 V3.2 L0 6.4 L-5.8 3.2 V-3.4 Z M-5.8 -3.4 L0 -.2 L5.8 -3.4 M0 -.2 V6.4"/></g><g transform="translate(68.6,152.6)" fill="none" stroke="#c2c2c2" stroke-width="1.15"><path d="M0 -6.4 L5.8 -3.4 V3.2 L0 6.4 L-5.8 3.2 V-3.4 Z M-5.8 -3.4 L0 -.2 L5.8 -3.4 M0 -.2 V6.4"/></g><path d="M49 166.4 H57 L53 172.4 Z" fill="#6e6e6e"/><g transform="translate(68.6,168.6)" fill="none" stroke="#c2c2c2" stroke-width="1.15"><path d="M0 -6.4 L5.8 -3.4 V3.2 L0 6.4 L-5.8 3.2 V-3.4 Z M-5.8 -3.4 L0 -.2 L5.8 -3.4 M0 -.2 V6.4"/></g><g transform="translate(82.6,184.6)" fill="none" stroke="#c2c2c2" stroke-width="1.15"><path d="M0 -6.4 L5.8 -3.4 V3.2 L0 6.4 L-5.8 3.2 V-3.4 Z M-5.8 -3.4 L0 -.2 L5.8 -3.4 M0 -.2 V6.4"/></g><g transform="translate(82.6,200.6)" fill="none" stroke="#c2c2c2" stroke-width="1.15"><path d="M0 -6.4 L5.8 -3.4 V3.2 L0 6.4 L-5.8 3.2 V-3.4 Z M-5.8 -3.4 L0 -.2 L5.8 -3.4 M0 -.2 V6.4"/></g><g transform="translate(82.6,216.6)" fill="none" stroke="#c2c2c2" stroke-width="1.15"><path d="M0 -6.4 L5.8 -3.4 V3.2 L0 6.4 L-5.8 3.2 V-3.4 Z M-5.8 -3.4 L0 -.2 L5.8 -3.4 M0 -.2 V6.4"/></g><g transform="translate(82.6,232.6)" fill="none" stroke="#c2c2c2" stroke-width="1.15"><path d="M0 -6.4 L5.8 -3.4 V3.2 L0 6.4 L-5.8 3.2 V-3.4 Z M-5.8 -3.4 L0 -.2 L5.8 -3.4 M0 -.2 V6.4"/></g><g transform="translate(82.6,248.6)" fill="none" stroke="#c2c2c2" stroke-width="1.15"><path d="M0 -6.4 L5.8 -3.4 V3.2 L0 6.4 L-5.8 3.2 V-3.4 Z M-5.8 -3.4 L0 -.2 L5.8 -3.4 M0 -.2 V6.4"/></g><g transform="translate(82.6,264.6)" fill="none" stroke="#c2c2c2" stroke-width="1.15"><path d="M0 -6.4 L5.8 -3.4 V3.2 L0 6.4 L-5.8 3.2 V-3.4 Z M-5.8 -3.4 L0 -.2 L5.8 -3.4 M0 -.2 V6.4"/></g><path d="M3.5999999999999996 682.8 H11.6 L7.6 688.8 Z" fill="#5e5e5e"/><path transform="translate(24.6,685.2) scale(.62)" d="M0 -9 L2.6 -3 L9 -2.6 L4 1.6 L5.6 8 L0 4.4 L-5.6 8 L-4 1.6 L-9 -2.6 L-2.6 -3 Z" fill="#dcdcdc"/><circle cx="36.6" cy="700.2" r="3.6" fill="none" stroke="#c4c4c4" stroke-width="1.3"/><path d="M39.120000000000005 702.72 L42.92 706.52" stroke="#c4c4c4" stroke-width="1.6"/><circle cx="36.6" cy="716.2" r="3.6" fill="none" stroke="#c4c4c4" stroke-width="1.3"/><path d="M39.120000000000005 718.72 L42.92 722.52" stroke="#c4c4c4" stroke-width="1.6"/><circle cx="36.6" cy="732.2" r="3.6" fill="none" stroke="#c4c4c4" stroke-width="1.3"/><path d="M39.120000000000005 734.72 L42.92 738.52" stroke="#c4c4c4" stroke-width="1.6"/><circle cx="36.6" cy="748.2" r="3.6" fill="none" stroke="#c4c4c4" stroke-width="1.3"/><path d="M39.120000000000005 750.72 L42.92 754.52" stroke="#c4c4c4" stroke-width="1.6"/><circle cx="36.6" cy="764.2" r="3.6" fill="none" stroke="#c4c4c4" stroke-width="1.3"/><path d="M39.120000000000005 766.72 L42.92 770.52" stroke="#c4c4c4" stroke-width="1.6"/><circle cx="36.6" cy="780.2" r="3.6" fill="none" stroke="#c4c4c4" stroke-width="1.3"/><path d="M39.120000000000005 782.72 L42.92 786.52" stroke="#c4c4c4" stroke-width="1.6"/><path d="M4.800000000000001 809 V817 L10.8 813 Z" fill="#5e5e5e"/><path d="M4.800000000000001 825 V833 L10.8 829 Z" fill="#5e5e5e"/><path transform="translate(19.4,808) scale(0.95)" d="M0 1 Q0 0 1 0 H4.4 L5.6 1.6 H12 Q13 1.6 13 2.6 V9.4 Q13 10.4 12 10.4 H1 Q0 10.4 0 9.4 Z" fill="#cfcfcf"/><path transform="translate(19.4,824) scale(0.95)" d="M0 1 Q0 0 1 0 H4.4 L5.6 1.6 H12 Q13 1.6 13 2.6 V9.4 Q13 10.4 12 10.4 H1 Q0 10.4 0 9.4 Z" fill="#cfcfcf"/><path d="M232.6 725 Q232.6 720 237.6 720 H253 L258.4 726.6 H277 Q282 726.6 282 731.6 V756.2 Q282 761.2 277 761.2 H237.6 Q232.6 761.2 232.6 756.2 Z" fill="#c6c6c6"/><rect x="778.4" y="659.4" width="302" height="14.2" rx="3" fill="#2a2a2a" stroke="#222" stroke-width="1"/><circle cx="788.6" cy="665.4" r="2" fill="none" stroke="#d0d0d0" stroke-width="1.1"/><path d="M790.0 666.8 L792.4 669.1999999999999" stroke="#d0d0d0" stroke-width="1.4000000000000001"/><g transform="translate(1083,659.4)" stroke="#b8b8b8" fill="none" stroke-width="1.1"><rect x="4" y="1" width="8.6" height="8"/><rect x="1" y="4.6" width="7.6" height="7.4" fill="#3c3c3c"/><path d="M6.4 3.2 H10.4 M8.4 3.2 V6.6"/></g><rect x="1103" y="657.4" width="22.59999999999991" height="18.2" fill="#414141"/><rect x="1128.4" y="657.4" width="23.59999999999991" height="18.2" fill="#414141"/><rect x="1154.6" y="657.4" width="23.0" height="18.2" fill="#414141"/><rect x="1180.2" y="657.4" width="24.799999999999955" height="18.2" fill="#414141"/><rect x="1207.6" y="657.4" width="37.0" height="18.2" fill="#414141"/><g transform="translate(1114,666.4)" fill="#e2e2e2"><circle cx="-2.8" cy="-3" r="2.6"/><rect x="-5.6" y=".6" width="5.4" height="5"/><path d="M1.6 -3.2 L6.6 1.4 L1.6 4.6 Z"/></g><g transform="translate(1139.6,666.4) rotate(-38)" fill="#e2e2e2"><path d="M-6.4 0 L-3 -3.4 H6 V3.4 H-3 Z"/><circle cx="-3" r="1" fill="#414141"/></g><g transform="translate(1166,666.4)"><circle r="6" fill="#ececec"/><rect x="-1" y="-3.6" width="2" height="4.6" fill="#414141"/><rect x="-1" y="2" width="2" height="1.8" fill="#414141"/></g><path transform="translate(1192.8,666.6) scale(.68)" d="M0 -9 L2.6 -3 L9 -2.6 L4 1.6 L5.6 8 L0 4.4 L-5.6 8 L-4 1.6 L-9 -2.6 L-2.6 -3 Z" fill="#9a9a9a"/><g transform="translate(1219,666.6)"><path d="M-6.6 0 Q0 -5.6 6.6 0 Q0 5.6 -6.6 0 Z" fill="none" stroke="#7e7e7e" stroke-width="1"/><circle r="1.8" fill="#7e7e7e"/></g><rect x="1174.6" y="1006.2" width="57" height="1.6" fill="#6a6a6a"/><circle cx="1207" cy="1007" r="5.2" fill="#b6b6b6"/></svg>
<span style="left:1228.4px;top:657.4px;line-height:16px;font-size:12px;color:#c8c8c8;letter-spacing:-0.080px;">14</span>
</div></body></html>
